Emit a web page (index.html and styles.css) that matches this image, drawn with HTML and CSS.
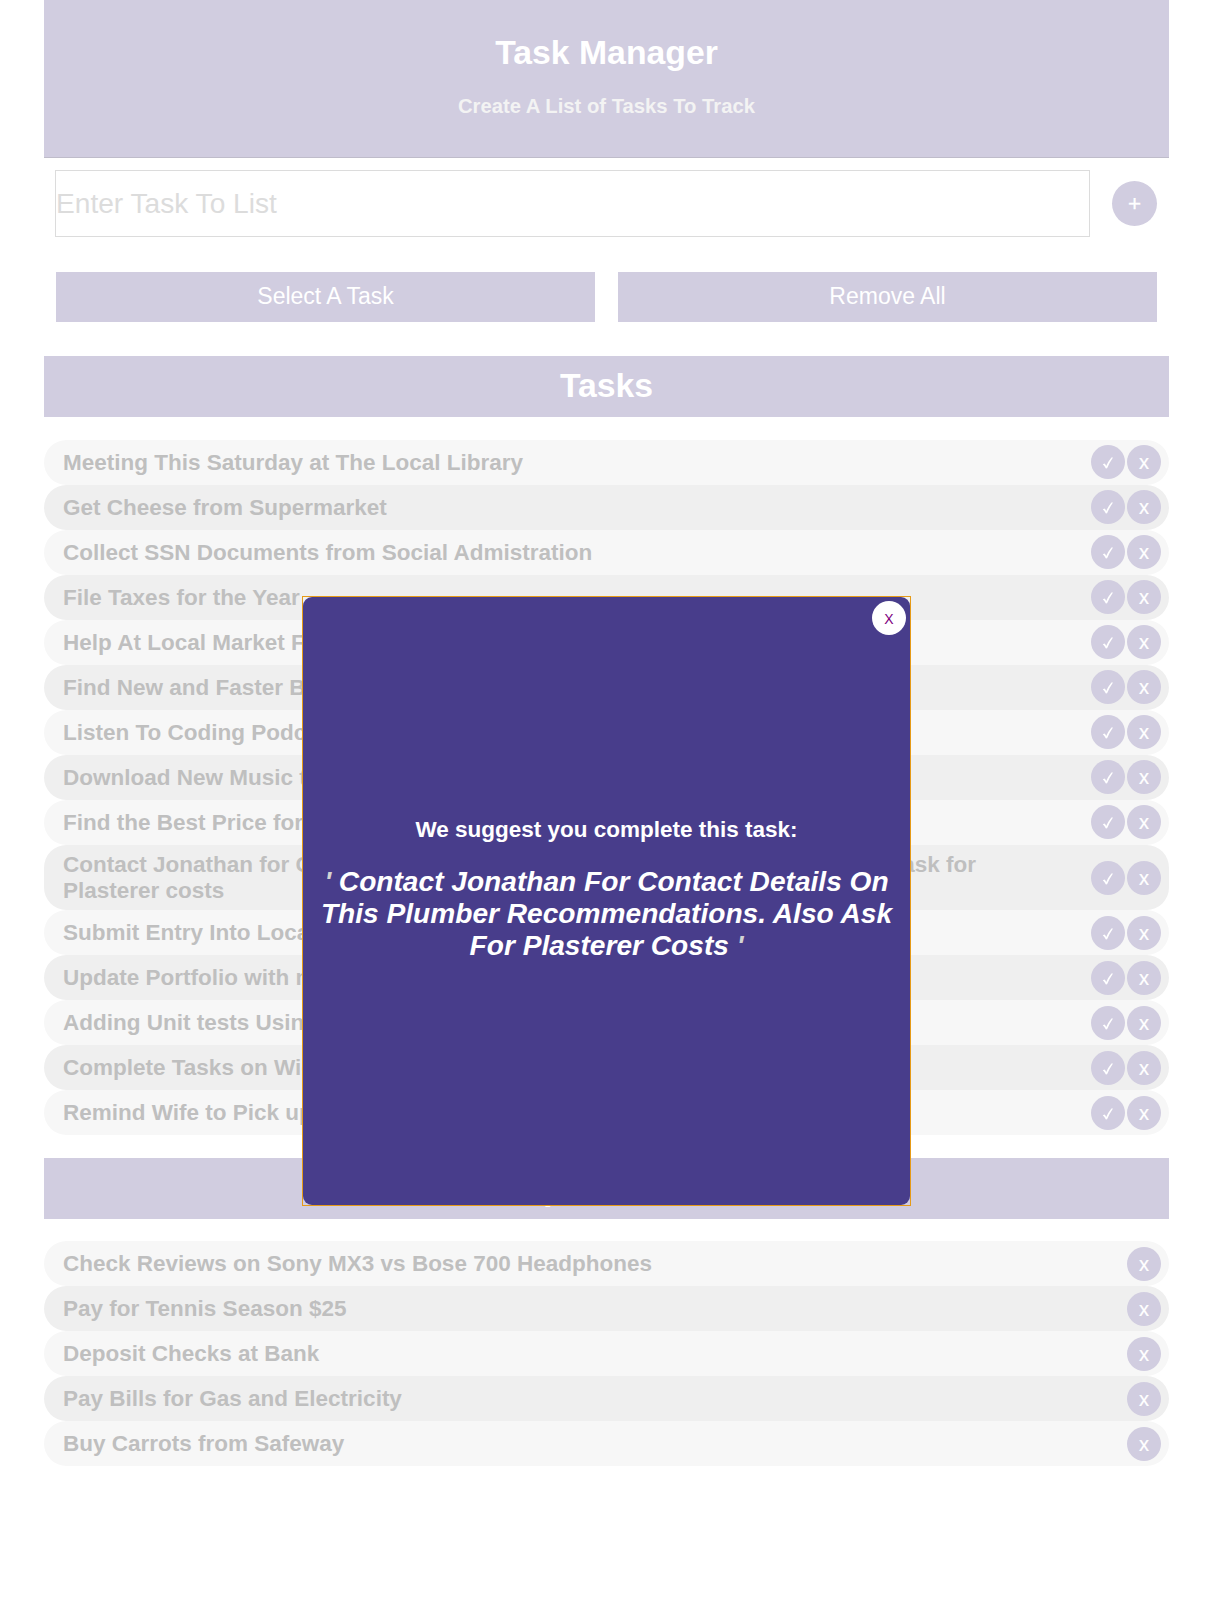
FILE: index.html
```
<!DOCTYPE html>
<html lang="en">
<head>
<meta charset="utf-8">
<title>Task Manager</title>
<link rel="stylesheet" href="styles.css">
</head>
<body>
<svg width="0" height="0" class="sprite" aria-hidden="true">
  <symbol id="check" viewBox="0 0 12 12"><path d="M.8 7.2 2.5 6.6Q3.6 7.6 4.2 9 6.3 4.100 9.400.4L11 .4Q7.600 5.200 5.100 11.300L3.900 11.500Q2.700 8.900.8 7.200Z" fill="currentColor"/></symbol>
</svg>
<main class="page">
  <header class="banner">
    <h1 class="banner-title">Task Manager</h1>
    <p class="banner-sub">Create A List of Tasks To Track</p>
  </header>
  <form class="entry">
    <input class="entry-input" type="text" placeholder="Enter Task To List">
    <button class="add" type="button">+</button>
  </form>
  <div class="actions">
    <button class="action" type="button">Select A Task</button>
    <button class="action" type="button">Remove All</button>
  </div>
  <h2 class="section">Tasks</h2>
  <ul class="list">
    <li class="row"><span class="name">Meeting This Saturday at The Local Library</span><button class="round"><svg class="tick"><use href="#check"/></svg></button><button class="round">x</button></li>
    <li class="row"><span class="name">Get Cheese from Supermarket</span><button class="round"><svg class="tick"><use href="#check"/></svg></button><button class="round">x</button></li>
    <li class="row"><span class="name">Collect SSN Documents from Social Admistration</span><button class="round"><svg class="tick"><use href="#check"/></svg></button><button class="round">x</button></li>
    <li class="row"><span class="name">File Taxes for the Year</span><button class="round"><svg class="tick"><use href="#check"/></svg></button><button class="round">x</button></li>
    <li class="row"><span class="name">Help At Local Market Fair</span><button class="round"><svg class="tick"><use href="#check"/></svg></button><button class="round">x</button></li>
    <li class="row"><span class="name">Find New and Faster Broadband</span><button class="round"><svg class="tick"><use href="#check"/></svg></button><button class="round">x</button></li>
    <li class="row"><span class="name">Listen To Coding Podcast</span><button class="round"><svg class="tick"><use href="#check"/></svg></button><button class="round">x</button></li>
    <li class="row"><span class="name">Download New Music to Phone</span><button class="round"><svg class="tick"><use href="#check"/></svg></button><button class="round">x</button></li>
    <li class="row"><span class="name">Find the Best Price for Laptop</span><button class="round"><svg class="tick"><use href="#check"/></svg></button><button class="round">x</button></li>
    <li class="row tall"><span class="name">Contact Jonathan for Contact Details on this Plumber recommendations. Also ask for Plasterer costs</span><button class="round"><svg class="tick"><use href="#check"/></svg></button><button class="round">x</button></li>
    <li class="row"><span class="name">Submit Entry Into Local Contest</span><button class="round"><svg class="tick"><use href="#check"/></svg></button><button class="round">x</button></li>
    <li class="row"><span class="name">Update Portfolio with new Projects</span><button class="round"><svg class="tick"><use href="#check"/></svg></button><button class="round">x</button></li>
    <li class="row"><span class="name">Adding Unit tests Using Jest</span><button class="round"><svg class="tick"><use href="#check"/></svg></button><button class="round">x</button></li>
    <li class="row"><span class="name">Complete Tasks on Widget</span><button class="round"><svg class="tick"><use href="#check"/></svg></button><button class="round">x</button></li>
    <li class="row"><span class="name">Remind Wife to Pick up Parcel</span><button class="round"><svg class="tick"><use href="#check"/></svg></button><button class="round">x</button></li>
  </ul>
  <h2 class="section">Completed Tasks</h2>
  <ul class="list done">
    <li class="row"><span class="name">Check Reviews on Sony MX3 vs Bose 700 Headphones</span><button class="round">x</button></li>
    <li class="row"><span class="name">Pay for Tennis Season $25</span><button class="round">x</button></li>
    <li class="row"><span class="name">Deposit Checks at Bank</span><button class="round">x</button></li>
    <li class="row"><span class="name">Pay Bills for Gas and Electricity</span><button class="round">x</button></li>
    <li class="row"><span class="name">Buy Carrots from Safeway</span><button class="round">x</button></li>
  </ul>
</main>
<section class="modal" role="dialog">
  <button class="close" type="button">X</button>
  <h3 class="modal-title">We suggest you complete this task:</h3>
  <p class="modal-task"><span class="quote">'</span> Contact Jonathan For Contact Details On This Plumber Recommendations. Also Ask For Plasterer Costs <span class="quote">'</span></p>
</section>
</body>
</html>
```
FILE: styles.css
```
* { box-sizing: border-box; }
body {
  margin: 0;
  min-height: 1612px;
  background: #fff;
  font-family: "Liberation Sans", Arial, sans-serif;
}
.sprite { position: absolute; }
h1, h2, h3, p, ul { margin: 0; padding: 0; }
button { border: 0; padding: 0; font-family: inherit; background: #d1cde0; color: #fff; }

.page { width: 1125px; margin-left: 44px; }
.banner {
  height: 158px;
  padding-top: 33px;
  text-align: center;
  background: #d1cde0;
  border-bottom: 1px solid #bfbcca;
}
.banner-title { font-size: 33.75px; line-height: 38px; color: #fff; }
.banner-sub { margin-top: 23px; font-size: 20.25px; line-height: 24px; font-weight: bold; color: #f3f3f3; }

.entry { display: flex; align-items: center; gap: 22px; padding: 12px 11px 0; }
.entry-input {
  width: 1035px;
  height: 67px;
  padding: 0;
  border: 1px solid #dcdcdc;
  font: 28.125px "Liberation Sans", Arial, sans-serif;
}
.entry-input::placeholder { color: #dcdcdc; }
.add { width: 45px; height: 45px; border-radius: 50%; font-size: 22.5px; -webkit-text-stroke: 0.3px #fff; }

.actions { display: flex; gap: 23px; padding: 35px 12px 0 12px; }
.action { flex: 1; height: 50px; padding-bottom: 1px; font-size: 23px; }

.section {
  height: 61px;
  margin-top: 34px;
  text-align: center;
  font-size: 33.75px;
  line-height: 58px;
  color: #fff;
  background: #d1cde0;
}
.list { margin-top: 23px; list-style: none; }
.list + .section { margin-top: 23px; line-height: 60px; }
.section + .done { margin-top: 22px; }
.row {
  display: flex;
  align-items: center;
  height: 45px;
  padding: 0 8px 1px 19px;
  border-radius: 22.5px;
  background: #f7f7f7;
}
.row:nth-child(even) { background: #efefef; }
.tall { height: 65px; }
.tall, .tall ~ .row { padding-bottom: 0; }
.name {
  width: 940px;
  margin-right: auto;
  padding-top: 1px;
  font-size: 22.5px;
  line-height: 26px;
  font-weight: bold;
  color: #bfbfbf;
}
.round {
  display: flex;
  align-items: center;
  justify-content: center;
  width: 34px;
  height: 34px;
  margin-left: 2px;
  padding-top: 1px;
  border-radius: 50%;
  font-size: 20px;
  -webkit-text-stroke: 0.2px #fff;
}
.done .round { margin-top: 2px; }
.tick { width: 12px; height: 12px; margin-top: 1px; }

.modal {
  position: absolute;
  left: 303px;
  top: 597px;
  width: 607px;
  height: 608px;
  padding: 220px 15px 0;
  border-radius: 9px;
  background: #483d8b;
  color: #fff;
  text-align: center;
}
.modal::after {
  content: "";
  position: absolute;
  inset: -1px;
  border: 1px solid #e69a17;
}
.close {
  position: absolute;
  top: 4px;
  right: 4px;
  width: 34px;
  height: 34px;
  padding-top: 2px;
  border-radius: 50%;
  background: #fff;
  color: #800080;
  font-size: 14px;
}
.modal-title { font-size: 22.5px; line-height: 26px; }
.modal-task {
  margin-top: 23px;
  font-size: 28.125px;
  line-height: 32px;
  font-weight: bold;
  font-style: italic;
}
.quote { color: #d3d3d3; }
```
